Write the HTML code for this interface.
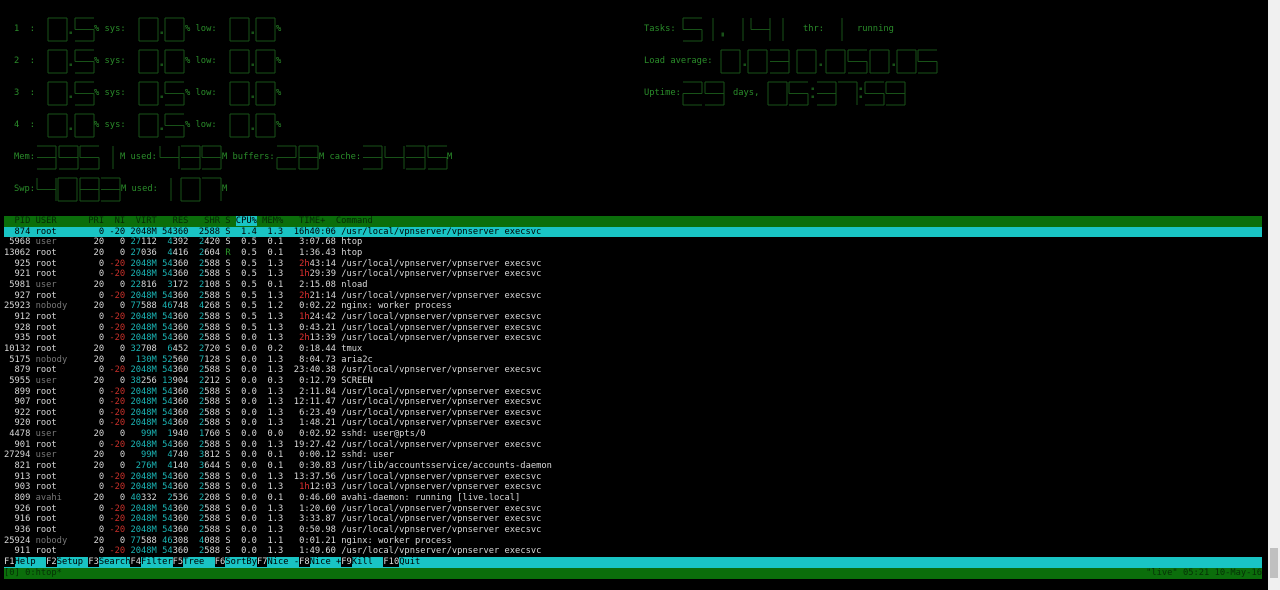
<!DOCTYPE html>
<html><head><meta charset="utf-8"><style>
html,body{margin:0;padding:0;background:#000;width:1280px;height:590px;overflow:hidden}
body{font-family:"DejaVu Sans Mono","Liberation Mono",monospace;font-size:8.75px;color:#d8d8d8}
.lbl{position:absolute;color:#2a8c2a;white-space:pre;line-height:10px}
#tbl{position:absolute;left:4px;top:216px;width:1258px}
.r{height:10.67px;line-height:10.67px;white-space:pre;overflow:hidden}
.hd{background:#0b6e0b;color:#062806}
.hd .cp{background:#19c4c4;color:#000}
.sel{background:#19c4c4;color:#000}
.c{color:#1bb5b5}.rd{color:#c8302a}.g{color:#777}.gr{color:#2a9a2a}.hr{color:#e03030}
#fk{position:absolute;left:4px;top:557px;width:1258px;height:10.67px;line-height:10.67px;background:#19c4c4;color:#000;white-space:pre}
#fk b{font-weight:normal;background:#000;color:#ddd}
#st{position:absolute;left:4px;top:568px;width:1258px;height:10.67px;line-height:10.67px;background:#0b6e0b;color:#063006;white-space:pre}
#sb{position:absolute;left:1268px;top:0;width:12px;height:590px;background:#f0f0f0}
#sb div{position:absolute;left:2px;top:548px;width:8px;height:30px;background:#c0c0c0}
svg{position:absolute;left:0;top:0}
</style></head><body>
<svg id="sv" width="1280" height="215"></svg>
<div class="lbl" style="left:14px;top:24px">1  :</div><div class="lbl" style="left:94px;top:24px">% sys:</div><div class="lbl" style="left:185px;top:24px">% low:</div><div class="lbl" style="left:276px;top:24px">%</div>
<div class="lbl" style="left:14px;top:56px">2  :</div><div class="lbl" style="left:94px;top:56px">% sys:</div><div class="lbl" style="left:185px;top:56px">% low:</div><div class="lbl" style="left:276px;top:56px">%</div>
<div class="lbl" style="left:14px;top:88px">3  :</div><div class="lbl" style="left:94px;top:88px">% sys:</div><div class="lbl" style="left:185px;top:88px">% low:</div><div class="lbl" style="left:276px;top:88px">%</div>
<div class="lbl" style="left:14px;top:120px">4  :</div><div class="lbl" style="left:94px;top:120px">% sys:</div><div class="lbl" style="left:185px;top:120px">% low:</div><div class="lbl" style="left:276px;top:120px">%</div>
<div class="lbl" style="left:14px;top:152px">Mem:</div><div class="lbl" style="left:120px;top:152px">M used:</div><div class="lbl" style="left:222px;top:152px">M buffers:</div><div class="lbl" style="left:319px;top:152px">M cache:</div><div class="lbl" style="left:447px;top:152px">M</div>
<div class="lbl" style="left:14px;top:184px">Swp:</div><div class="lbl" style="left:121px;top:184px">M used:</div><div class="lbl" style="left:222px;top:184px">M</div>
<div class="lbl" style="left:644px;top:24px">Tasks:</div><div class="lbl" style="left:803px;top:24px">thr:</div><div class="lbl" style="left:857px;top:24px">running</div>
<div class="lbl" style="left:644px;top:56px">Load average:</div>
<div class="lbl" style="left:644px;top:88px">Uptime:</div><div class="lbl" style="left:733px;top:88px">days,</div>
<div id="tbl"></div>
<div id="fk"><b>F1</b>Help  <b>F2</b>Setup <b>F3</b>Search<b>F4</b>Filter<b>F5</b>Tree  <b>F6</b>SortBy<b>F7</b>Nice -<b>F8</b>Nice +<b>F9</b>Kill  <b>F10</b>Quit</div>
<div id="st">[0] 0:htop*<span style="position:absolute;right:0">"live" 05:21 10-May-16</span></div>
<div id="sb"><div></div></div>
<script>
var S={0:'abcdef',1:'x',2:'abged',3:'abgcd',4:'fgbc',5:'afgcd',7:'abc',8:'abcdefg',9:'abcdfg'};
var out='',W=19,H=23,col='#185218';
function L(x1,y1,x2,y2){out+='<line x1="'+x1+'" y1="'+y1+'" x2="'+x2+'" y2="'+y2+'"/>';}
function D(x,y,c){
 if(c=='.'){out+='<rect x="'+x+'" y="'+(y+H-9)+'" width="1.5" height="1.5"/>';return;}
 if(c==':'){out+='<rect x="'+x+'" y="'+(y+6)+'" width="1.5" height="1.5"/><rect x="'+x+'" y="'+(y+14)+'" width="1.5" height="1.5"/>';return;}
 if(c==','){out+='<rect x="'+x+'" y="'+(y+H-8)+'" width="1.5" height="3"/>';return;}
 var s=S[c],m=y+H/2;
 if(s=='x'){L(x,y,x,y+H);return;}
 if(s.indexOf('a')>=0)L(x,y,x+W,y);
 if(s.indexOf('b')>=0)L(x+W,y,x+W,m);
 if(s.indexOf('c')>=0)L(x+W,m,x+W,y+H);
 if(s.indexOf('d')>=0)L(x,y+H,x+W,y+H);
 if(s.indexOf('e')>=0)L(x,m,x,y+H);
 if(s.indexOf('f')>=0)L(x,y,x,m);
 if(s.indexOf('g')>=0)L(x,m,x+W,m);
}
function G(list,y){list.forEach(function(p){D(p[0],y,p[1]);});}
var cpu=[['0','5','0','0','0','0'],['0','5','0','0','0','0'],['0','5','0','5','0','0'],['0','0','0','5','0','0']];
cpu.forEach(function(v,i){var y=18+32*i;G([[48,v[0]],[70,'.'],[75,v[1]],[139,v[2]],[161,'.'],[165,v[3]],[230,v[4]],[252,'.'],[256,v[5]]],y);});
G([[37,3],[59,9],[80,5],[113,1],[160,4],[181,3],[202,9],[277,2],[299,8],[363,3],[385,4],[406,3],[428,5]],146);
G([[37,4],[58,0],[80,8],[101,3],[171,1],[181,0],[202,7]],178);
G([[683,5],[713,1],[722,','],[743,1],[751,4],[783,1],[842,1]],18);
G([[721,0],[744,'.'],[748,0],[770,3],[797,0],[820,'.'],[826,0],[848,5],[870,0],[893,'.'],[897,0],[918,5]],50);
G([[683,2],[705,9],[768,0],[789,5],[812,':'],[817,3],[838,7],[860,':'],[865,5],[886,9]],82);
document.getElementById('sv').innerHTML='<g stroke="'+col+'" stroke-width="1" fill="'+col+'" shape-rendering="crispEdges">'+out+'</g>';

function pad(s,n){s=String(s);while(s.length<n)s=' '+s;return s;}
function rpad(s,n){s=String(s);while(s.length<n)s+=' ';return s;}
function num(v,n){var s=pad(v,n);if(/M$/.test(v))return '<span class="c">'+s+'</span>';var t=s.trim();if(t.length>3){var k=t.length-3;return s.slice(0,n-t.length)+'<span class="c">'+t.slice(0,k)+'</span>'+t.slice(k);}return s;}
function tm(t){var s=pad(t,9);var m=s.match(/^(\s*)(\d+h)(.*)$/);if(m)return m[1]+'<span class="hr">'+m[2]+'</span>'+m[3];return s;}
var V='/usr/local/vpnserver/vpnserver execsvc';
function vp(pid,cpu,t){return [pid,'root',0,-20,'2048M','54360','2588','S',cpu,'1.3',t,V];}
var rows=[vp(874,'1.4','16h40:06'),
[5968,'user',20,0,'27112','4392','2420','S','0.5','0.1','3:07.68','htop'],
[13062,'root',20,0,'27036','4416','2604','R','0.5','0.1','1:36.43','htop'],
vp(925,'0.5','2h43:14'),vp(921,'0.5','1h29:39'),
[5981,'user',20,0,'22816','3172','2108','S','0.5','0.1','2:15.08','nload'],
vp(927,'0.5','2h21:14'),
[25923,'nobody',20,0,'77588','46748','4268','S','0.5','1.2','0:02.22','nginx: worker process'],
vp(912,'0.5','1h24:42'),vp(928,'0.5','0:43.21'),vp(935,'0.0','2h13:39'),
[10132,'root',20,0,'32708','6452','2720','S','0.0','0.2','0:18.44','tmux'],
[5175,'nobody',20,0,'130M','52560','7128','S','0.0','1.3','8:04.73','aria2c'],
vp(879,'0.0','23:40.38'),
[5955,'user',20,0,'38256','13904','2212','S','0.0','0.3','0:12.79','SCREEN'],
vp(899,'0.0','2:11.84'),vp(907,'0.0','12:11.47'),vp(922,'0.0','6:23.49'),vp(920,'0.0','1:48.21'),
[4478,'user',20,0,'99M','1940','1760','S','0.0','0.0','0:02.92','sshd: user@pts/0'],
vp(901,'0.0','19:27.42'),
[27294,'user',20,0,'99M','4740','3812','S','0.0','0.1','0:00.12','sshd: user'],
[821,'root',20,0,'276M','4140','3644','S','0.0','0.1','0:30.83','/usr/lib/accountsservice/accounts-daemon'],
vp(913,'0.0','13:37.56'),vp(903,'0.0','1h12:03'),
[809,'avahi',20,0,'40332','2536','2208','S','0.0','0.1','0:46.60','avahi-daemon: running [live.local]'],
vp(926,'0.0','1:20.60'),vp(916,'0.0','3:33.87'),vp(936,'0.0','0:50.98'),
[25924,'nobody',20,0,'77588','46308','4088','S','0.0','1.1','0:01.21','nginx: worker process'],
vp(911,'0.0','1:49.60')];
var h='<div class="r hd">  PID USER      PRI  NI  VIRT   RES   SHR S <span class="cp">CPU%</span> MEM%   TIME+  Command</div>';
rows.forEach(function(r,i){
 if(i==0){h+='<div class="r sel">'+pad(r[0],5)+' '+rpad(r[1],9)+' '+pad(r[2],3)+' '+pad(r[3],3)+' '+pad(r[4],5)+' '+pad(r[5],5)+' '+pad(r[6],5)+' '+r[7]+' '+pad(r[8],4)+' '+pad(r[9],4)+' '+pad(r[10],9)+' '+r[11]+'</div>';return;}
 var u=r[1]=='root'?rpad(r[1],9):'<span class="g">'+rpad(r[1],9)+'</span>';
 var ni=r[3]<0?'<span class="rd">'+pad(r[3],3)+'</span>':pad(r[3],3);
 var st=r[7]=='R'?'<span class="gr">R</span>':r[7];
 h+='<div class="r">'+pad(r[0],5)+' '+u+' '+pad(r[2],3)+' '+ni+' '+num(r[4],5)+' '+num(r[5],5)+' '+num(r[6],5)+' '+st+' '+pad(r[8],4)+' '+pad(r[9],4)+' '+tm(r[10])+' '+r[11]+'</div>';
});
document.getElementById('tbl').innerHTML=h;
</script>
</body></html>
